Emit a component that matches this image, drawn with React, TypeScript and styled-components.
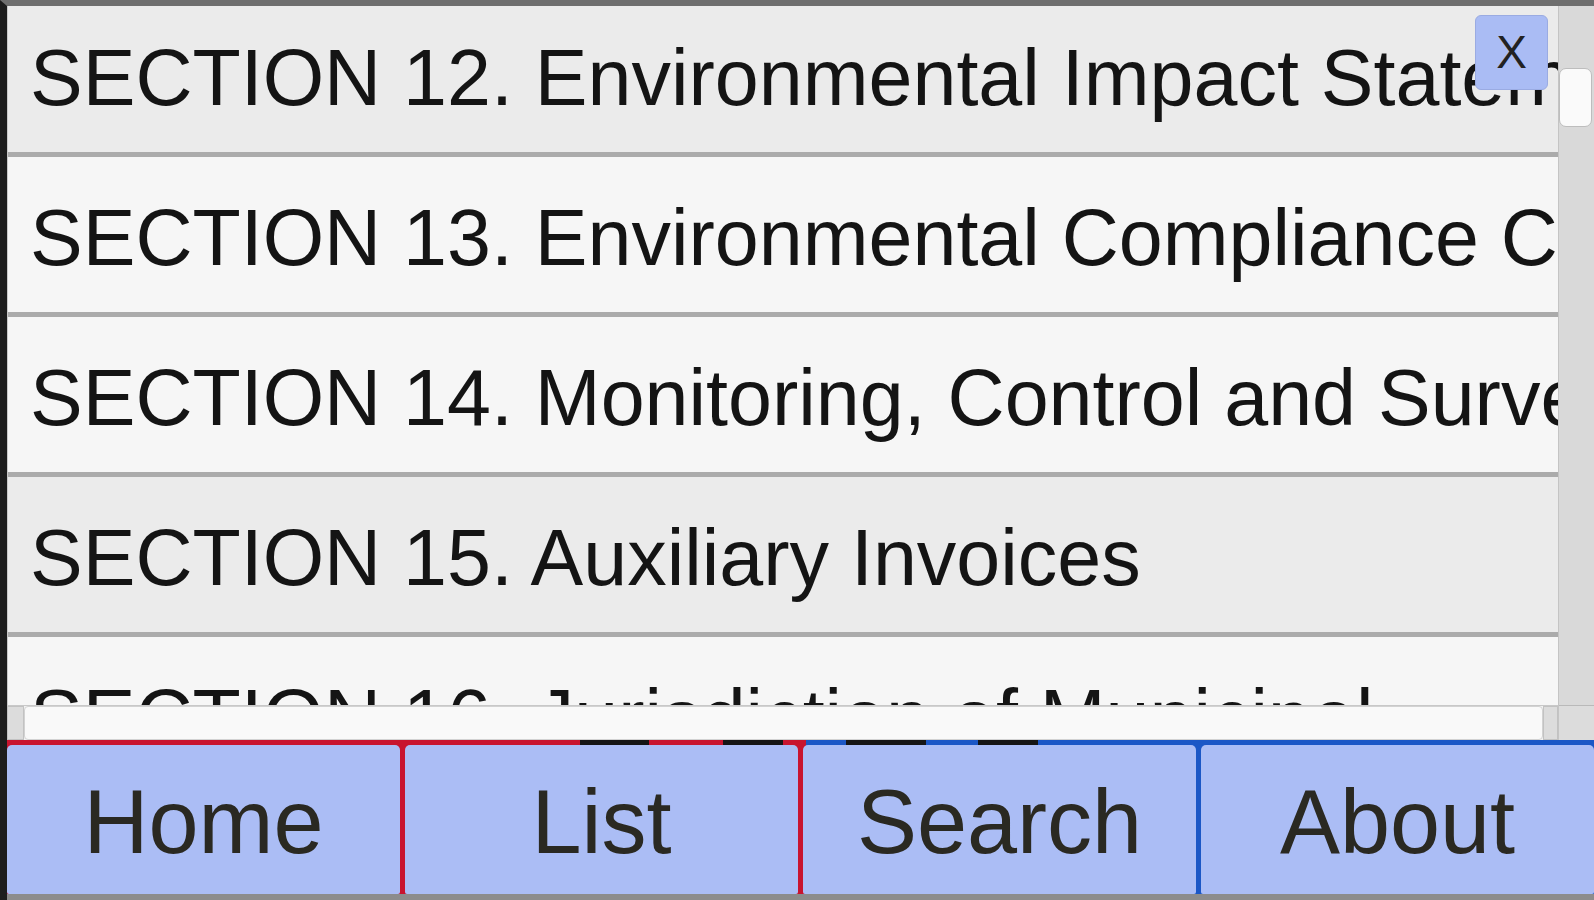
import React from 'react';
import styled, { createGlobalStyle } from 'styled-components';

const GlobalStyle = createGlobalStyle`
  html, body {
    margin: 0;
    padding: 0;
    width: 1594px;
    height: 900px;
    overflow: hidden;
    background: #1c1c1c;
    font-family: "Liberation Sans", Arial, sans-serif;
  }
`;

const Frame = styled.div`
  box-sizing: border-box;
  width: 1594px;
  height: 900px;
  display: flex;
  flex-direction: column;
  border-top: 6px solid #6e6e6e;
  border-left: 7px solid #1d1d1d;
  background: #f5f5f5;
`;

const Viewport = styled.div`
  flex: 1;
  display: flex;
  min-height: 0;
`;

const Main = styled.div`
  flex: 1;
  display: flex;
  flex-direction: column;
  min-width: 0;
`;

const ListArea = styled.div`
  flex: 1;
  position: relative;
  overflow: hidden;
  border-left: 1px solid #c9c9c9;
`;

const ListInner = styled.div`
  margin-top: -9px;
`;

const Row = styled.div<{ $shade: boolean }>`
  box-sizing: border-box;
  height: 160px;
  display: flex;
  align-items: center;
  padding: 7px 0 0 22px;
  white-space: nowrap;
  overflow: hidden;
  font-size: 79px;
  color: #141414;
  background: ${(p) => (p.$shade ? '#ebebeb' : '#f6f6f6')};
  border-bottom: 5px solid #ababab;
`;

const CloseButton = styled.div`
  position: absolute;
  top: 9px;
  right: 10px;
  box-sizing: border-box;
  width: 73px;
  height: 75px;
  display: flex;
  align-items: center;
  justify-content: center;
  padding-bottom: 1px;
  background: #aabcf4;
  border: 1px solid #9aabe2;
  border-radius: 6px;
  font-size: 46px;
  color: #222;
`;

const HScroll = styled.div`
  box-sizing: border-box;
  height: 35px;
  display: flex;
  align-items: stretch;
  background: #f3f3f3;
  border-top: 1px solid #c8c8c8;
`;

const Stub = styled.div<{ $w: number }>`
  width: ${(p) => p.$w}px;
  background: #dcdcdc;
  border: 1px solid #c2c2c2;
  box-sizing: border-box;
`;

const HThumb = styled.div`
  flex: 1;
  background: #f9f9f9;
  border: 1px solid #d2d2d2;
  border-radius: 4px;
`;

const VScroll = styled.div`
  width: 36px;
  display: flex;
  flex-direction: column;
  background: #d9d9d9;
  border-left: 1px solid #c4c4c4;
  box-sizing: border-box;
`;

const VTrack = styled.div`
  flex: 1;
  padding-top: 62px;
`;

const VThumb = styled.div`
  height: 57px;
  margin-right: 2px;
  background: #fafafa;
  border: 1px solid #bdbdbd;
  border-radius: 7px;
`;

const Corner = styled.div`
  height: 35px;
  border-top: 1px solid #b9b9b9;
  background: #dcdcdc;
  box-sizing: border-box;
`;

const Nav = styled.nav`
  height: 160px;
  box-sizing: border-box;
  display: grid;
  grid-template-columns: repeat(4, 1fr);
  column-gap: 5px;
  padding-top: 5px;
  border-bottom: 6px solid #8c8c8c;
  background: linear-gradient(
    90deg,
    #c8142f 0px,
    #c8142f 573px,
    #151515 573px,
    #151515 642px,
    #c8142f 642px,
    #c8142f 716px,
    #151515 716px,
    #151515 776px,
    #c8142f 776px,
    #c8142f 799px,
    #1b57c6 799px,
    #1b57c6 839px,
    #151515 839px,
    #151515 919px,
    #1b57c6 919px,
    #1b57c6 971px,
    #151515 971px,
    #151515 1031px,
    #1b57c6 1031px
  );
`;

const NavButton = styled.div`
  display: flex;
  align-items: center;
  justify-content: center;
  background: #abbdf5;
  border-radius: 5px 5px 2px 2px;
  font-size: 90px;
  color: #2a2922;
  padding-top: 6px;
`;

const sections = [
  { title: 'SECTION 12. Environmental Impact Statement', shade: true },
  { title: 'SECTION 13. Environmental Compliance Certificate', shade: false },
  { title: 'SECTION 14. Monitoring, Control and Surveillance', shade: false },
  { title: 'SECTION 15. Auxiliary Invoices', shade: true },
  { title: 'SECTION 16. Jurisdiction of Municipal', shade: false },
];

const navItems = ['Home', 'List', 'Search', 'About'];

export default function App() {
  return (
    <>
      <GlobalStyle />
      <Frame>
        <Viewport>
          <Main>
            <ListArea>
              <ListInner>
                {sections.map((s) => (
                  <Row key={s.title} $shade={s.shade}>
                    {s.title}
                  </Row>
                ))}
              </ListInner>
              <CloseButton>X</CloseButton>
            </ListArea>
            <HScroll>
              <Stub $w={17} />
              <HThumb />
              <Stub $w={15} />
            </HScroll>
          </Main>
          <VScroll>
            <VTrack>
              <VThumb />
            </VTrack>
            <Corner />
          </VScroll>
        </Viewport>
        <Nav>
          {navItems.map((n) => (
            <NavButton key={n}>{n}</NavButton>
          ))}
        </Nav>
      </Frame>
    </>
  );
}
